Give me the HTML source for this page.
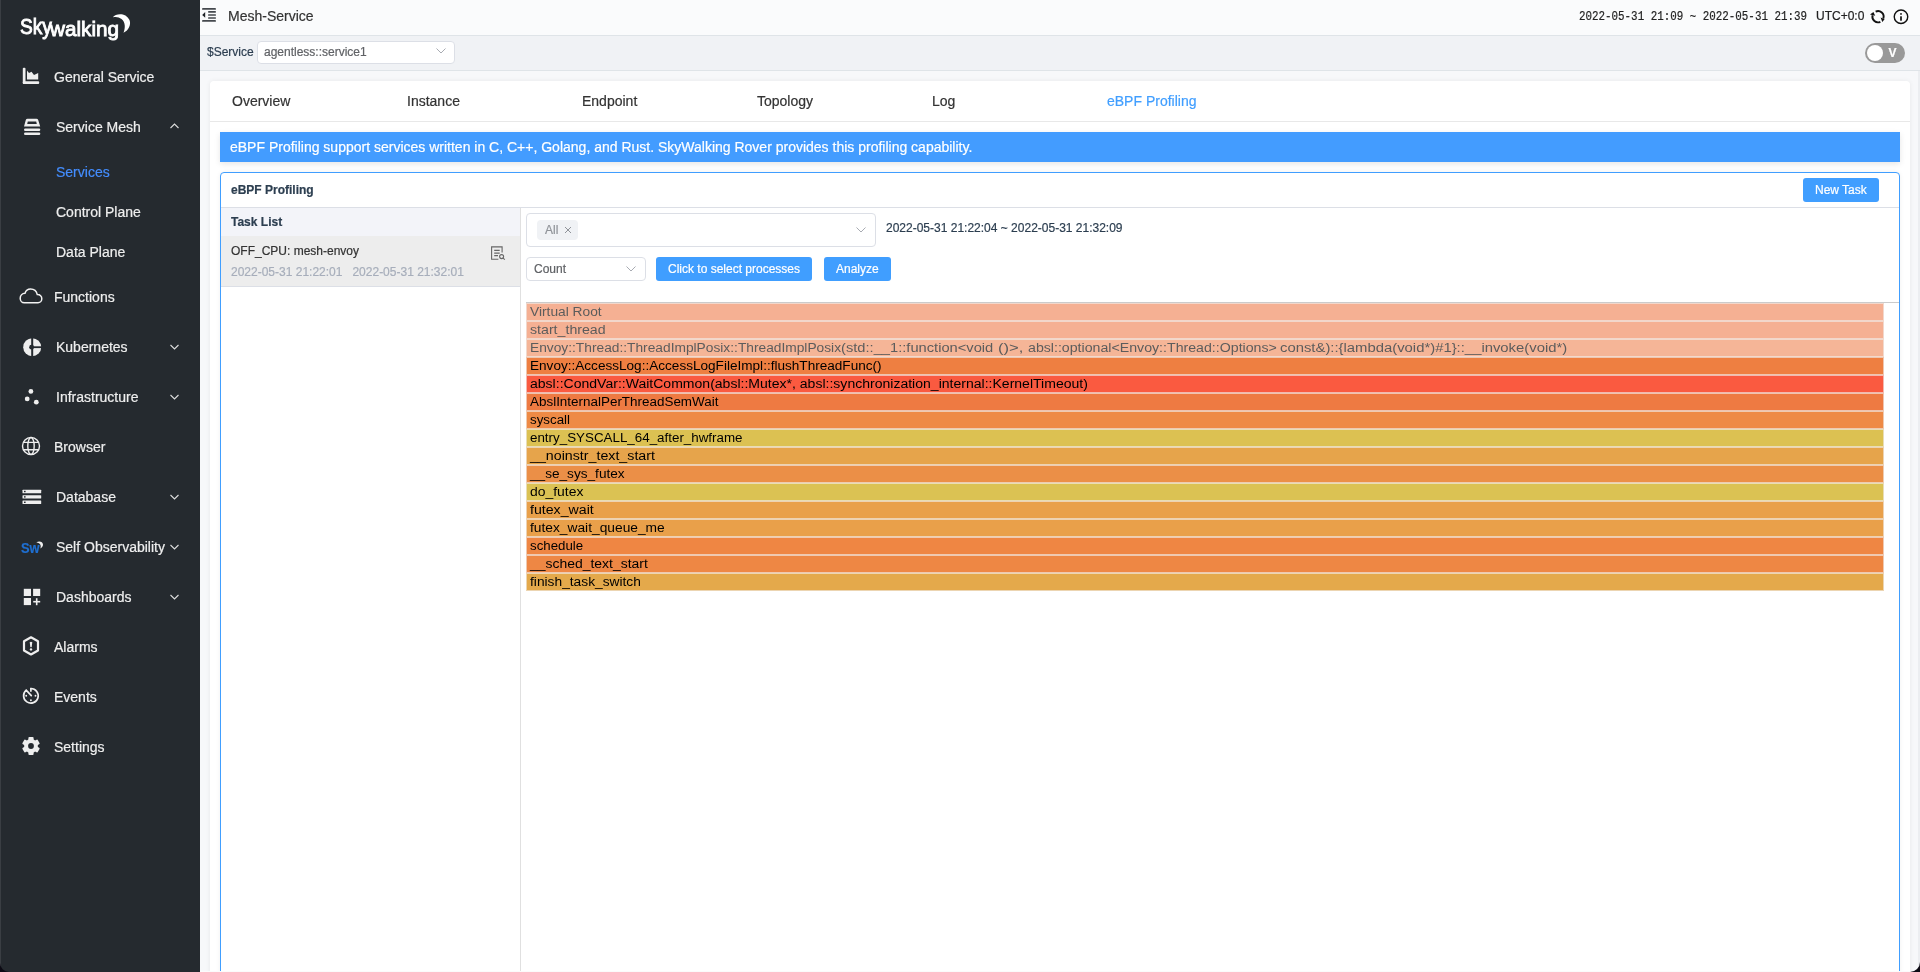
<!DOCTYPE html><html><head><meta charset="utf-8"><title>SkyWalking</title><style>
*{margin:0;padding:0;box-sizing:border-box}
html,body{width:1920px;height:972px;overflow:hidden;background:#f7f8fa;font-family:"Liberation Sans",sans-serif;}
.a{position:absolute;white-space:nowrap;-webkit-text-stroke:0.2px currentColor}
.t14{font-size:14px;line-height:16px;height:16px}
.t12{font-size:12px;line-height:14px;height:14px}
.b{font-weight:bold}
svg{position:absolute;overflow:visible}
</style></head><body><div id="root" style="position:absolute;left:0;top:0;width:1920px;height:972px;will-change:transform">
<div class="a" style="left:0;top:0;width:200px;height:972px;background:#252a2f"></div>
<div class="a" style="left:0;top:0;width:1px;height:972px;background:#3a3e43"></div>
<div class="a" style="left:19.5px;top:14px;font-size:22px;line-height:26px;color:#fff;-webkit-text-stroke:0.9px #fff;transform:scaleX(0.87);transform-origin:0 0">Sky</div>
<div class="a" style="left:49.5px;top:16px;font-size:21px;line-height:25px;color:#fff;-webkit-text-stroke:0.9px #fff;transform:scaleX(0.985);transform-origin:0 0">walking</div>
<svg style="left:0;top:0" width="140" height="45" viewBox="0 0 140 45"><path d="M112.8,17.3 C116,13 126,12.5 129.5,20 C131.5,25 128,31 123.5,32.7 C125.5,28 125.5,22 121.5,19 C119,17 116,16.5 112.8,17.3Z" fill="#fff"/></svg>
<div class="a t14" style="left:54px;top:69px;color:#eee">General Service</div>
<div class="a t14" style="left:56px;top:119px;color:#eee">Service Mesh</div>
<svg style="left:170px;top:123px" width="9" height="6" viewBox="0 0 9 6"><path d="M0.5,5 L4.5,1 L8.5,5" fill="none" stroke="#ddd" stroke-width="1.1"/></svg>
<div class="a t14" style="left:56px;top:164px;color:#448dfe">Services</div>
<div class="a t14" style="left:56px;top:204px;color:#eee">Control Plane</div>
<div class="a t14" style="left:56px;top:244px;color:#eee">Data Plane</div>
<div class="a t14" style="left:54px;top:289px;color:#eee">Functions</div>
<div class="a t14" style="left:56px;top:339px;color:#eee">Kubernetes</div>
<svg style="left:170px;top:344px" width="9" height="6" viewBox="0 0 9 6"><path d="M0.5,1 L4.5,5 L8.5,1" fill="none" stroke="#ddd" stroke-width="1.1"/></svg>
<div class="a t14" style="left:56px;top:389px;color:#eee">Infrastructure</div>
<svg style="left:170px;top:394px" width="9" height="6" viewBox="0 0 9 6"><path d="M0.5,1 L4.5,5 L8.5,1" fill="none" stroke="#ddd" stroke-width="1.1"/></svg>
<div class="a t14" style="left:54px;top:439px;color:#eee">Browser</div>
<div class="a t14" style="left:56px;top:489px;color:#eee">Database</div>
<svg style="left:170px;top:494px" width="9" height="6" viewBox="0 0 9 6"><path d="M0.5,1 L4.5,5 L8.5,1" fill="none" stroke="#ddd" stroke-width="1.1"/></svg>
<div class="a t14" style="left:56px;top:539px;color:#eee">Self Observability</div>
<svg style="left:170px;top:544px" width="9" height="6" viewBox="0 0 9 6"><path d="M0.5,1 L4.5,5 L8.5,1" fill="none" stroke="#ddd" stroke-width="1.1"/></svg>
<div class="a t14" style="left:56px;top:589px;color:#eee">Dashboards</div>
<svg style="left:170px;top:594px" width="9" height="6" viewBox="0 0 9 6"><path d="M0.5,1 L4.5,5 L8.5,1" fill="none" stroke="#ddd" stroke-width="1.1"/></svg>
<div class="a t14" style="left:54px;top:639px;color:#eee">Alarms</div>
<div class="a t14" style="left:54px;top:689px;color:#eee">Events</div>
<div class="a t14" style="left:54px;top:739px;color:#eee">Settings</div>
<svg style="left:22px;top:67px" width="18" height="18" viewBox="0 0 18 18"><g fill="#eee"><rect x="0.8" y="0.8" width="2.7" height="16.2" rx="1"/><rect x="0.8" y="14.2" width="16.4" height="2.8" rx="1"/><path d="M5,3.6 L7,6 L9.5,4.8 L12,8 L16.2,6 V12.6 H5Z"/></g></svg>
<svg style="left:23px;top:118px" width="18" height="18" viewBox="0 0 18 18"><path d="M1,8.5 L2.8,2 Q3.2,0.7 4.5,0.7 H13.5 Q14.8,0.7 15.2,2 L17.2,8.5 Z M4.8,3.4 L4.2,5.9 H13.8 L13.2,3.4Z" fill="#eee" fill-rule="evenodd"/><rect x="1" y="10.5" width="16.3" height="2.6" rx="1.3" fill="#eee"/><rect x="1" y="14.4" width="16.3" height="2.7" rx="1.3" fill="#eee"/></svg>
<svg style="left:19px;top:287px" width="24" height="18" viewBox="0 0 24 18"><path d="M5.2,15.8 H19 C21.2,15.8 22.8,13.8 22.8,11.8 C22.8,9.4 21,7.6 18.6,7.6 L18.3,7.6 C17.6,4.4 15,2 11.6,2 C8.7,2 6.7,3.8 6,6.2 C3.3,6.3 1.2,8.4 1.2,11.2 C1.2,13.8 3,15.8 5.2,15.8Z" fill="none" stroke="#f2f2f2" stroke-width="1.5"/></svg>
<svg style="left:23px;top:338px" width="19" height="19" viewBox="0 0 19 19"><circle cx="9.2" cy="9.2" r="9" fill="#eee"/><rect x="8.2" y="0" width="2" height="19" fill="#252a2f"/><rect x="9" y="8.3" width="10" height="1.8" fill="#252a2f"/><circle cx="8.6" cy="9.2" r="2.4" fill="#252a2f"/></svg>
<svg style="left:24px;top:388px" width="16" height="17" viewBox="0 0 16 17"><circle cx="6.9" cy="3.4" r="2.4" fill="#eee"/><circle cx="3.2" cy="10.9" r="2.4" fill="#eee"/><circle cx="12.3" cy="14.2" r="2.4" fill="#eee"/></svg>
<svg style="left:21px;top:436px" width="20" height="20" viewBox="0 0 20 20"><g fill="none" stroke="#eee" stroke-width="1.4"><circle cx="10" cy="10" r="8.5"/><ellipse cx="10" cy="10" rx="3.2" ry="8.5"/><path d="M2.5,6.4 H17.5 M2.5,13.8 H17.5"/></g></svg>
<svg style="left:22px;top:489px" width="20" height="17" viewBox="0 0 20 17"><g fill="#eee"><rect x="0.5" y="0.8" width="18.7" height="3.4" rx="0.5"/><rect x="0.5" y="6.2" width="18.7" height="3.4" rx="0.5"/><rect x="0.5" y="11.6" width="18.7" height="3.4" rx="0.5"/></g><g fill="#252a2f"><rect x="2" y="1.8" width="1.6" height="1.4"/><rect x="2" y="7.2" width="1.6" height="1.4"/><rect x="2" y="12.6" width="1.6" height="1.4"/></g></svg>
<div class="a b" style="left:20.5px;top:540px;font-size:14px;line-height:16px;color:#1f6fd1;transform:scaleX(0.92);transform-origin:0 0">Sw</div>
<svg style="left:36px;top:540.5px" width="8" height="8" viewBox="0 0 8 8"><path d="M0.3,1.6 C2.5,-0.2 6.8,0.2 7,3.6 C7.1,5.3 6,6.8 4.3,7.4 C5.2,5.5 4.8,3 3,2.2 C2.2,1.8 1.2,1.6 0.3,1.6Z" fill="#eee"/></svg>
<svg style="left:23px;top:588px" width="18" height="18" viewBox="0 0 18 18"><g fill="#eee"><rect x="0.8" y="0.8" width="7.2" height="7.2"/><rect x="10.1" y="0.8" width="7.1" height="7.2"/><rect x="0.8" y="10" width="7.2" height="7.1"/><rect x="12.9" y="10.2" width="1.6" height="7"/><rect x="10.2" y="12.9" width="7" height="1.6"/></g></svg>
<svg style="left:22px;top:636px" width="18" height="20" viewBox="0 0 18 20"><path d="M9,1.3 L16,5.3 V14.5 L9,18.5 L2,14.5 V5.3Z" fill="none" stroke="#eee" stroke-width="2.2" stroke-linejoin="round"/><path d="M7.7,6.2 Q9,5.2 10.3,6.2 L9.7,11 Q9,11.6 8.3,11 Z" fill="#eee"/><circle cx="9" cy="13.4" r="1.2" fill="#eee"/></svg>
<svg style="left:22px;top:687px" width="18" height="18" viewBox="0 0 18 18"><g fill="none" stroke="#eee" stroke-width="1.7" stroke-linecap="round"><path d="M8.9,1.5 A7.3,7.3 0 1 1 4.21,3.21 L9.3,8.6"/><path d="M8.9,1.5 V4.1"/></g><circle cx="4.2" cy="8.8" r="0.95" fill="#eee"/><circle cx="13.5" cy="8.8" r="0.95" fill="#eee"/><circle cx="8.9" cy="13.3" r="0.95" fill="#eee"/></svg>
<svg style="left:22px;top:737px" width="18" height="18" viewBox="0 0 18 18"><g fill="#eee"><circle cx="9" cy="9" r="6.9"/><rect x="6.4" y="0.1" width="5.2" height="17.8" rx="1"/><rect x="6.4" y="0.1" width="5.2" height="17.8" rx="1" transform="rotate(60 9 9)"/><rect x="6.4" y="0.1" width="5.2" height="17.8" rx="1" transform="rotate(120 9 9)"/></g><circle cx="9" cy="9" r="2.9" fill="#252a2f"/></svg>
<svg style="left:0;top:963px" width="9" height="9" viewBox="0 0 9 9"><path d="M0,0 V9 H9 A9,9 0 0 1 0,0Z" fill="#0c0a14"/></svg>
<div class="a" style="left:200px;top:0;width:1720px;height:35px;background:#fafbfc"></div>
<div class="a" style="left:200px;top:35px;width:1720px;height:1px;background:#dfe4e8"></div>
<svg style="left:202px;top:8px" width="15" height="15" viewBox="0 0 15 15"><g fill="#45494e"><rect x="0.1" y="0.1" width="13.8" height="1.7" rx="0.4"/><rect x="6.1" y="3.1" width="7.8" height="1.6" rx="0.4"/><rect x="6.1" y="6.2" width="7.8" height="1.6" rx="0.4"/><rect x="6.1" y="9.2" width="7.8" height="1.6" rx="0.4"/><rect x="0.1" y="12.1" width="13.8" height="1.7" rx="0.4"/><path d="M0.2,6.9 L3.2,4.1 V9.7Z" fill="#1d2126"/></g></svg>
<div class="a t14" style="left:228px;top:8px;color:#333">Mesh-Service</div>
<div class="a" style="left:1579px;top:10px;font-family:'Liberation Mono',monospace;font-size:13px;line-height:14px;color:#222;transform:scaleX(0.835);transform-origin:0 0">2022-05-31 21:09 ~ 2022-05-31 21:39</div>
<div class="a t12" style="left:1816px;top:9px;color:#222">UTC+0:0</div>
<svg style="left:1866px;top:6px" width="20" height="20" viewBox="0 0 20 20"><g fill="none" stroke="#111" stroke-width="1.9"><path d="M9.63,5.62 A5.6,5.6 0 0 1 17.26,12.62"/><path d="M14.37,15.78 A5.6,5.6 0 0 1 6.59,9.25"/></g><path d="M14.6,11.6 L18.6,13.3 L16.3,15.9Z M4.0,8.4 L7.4,5.9 L9.2,9.8Z" fill="#111"/></svg>
<svg style="left:1894px;top:10px" width="16" height="16" viewBox="0 0 16 16"><circle cx="7" cy="6.7" r="6.75" fill="none" stroke="#111" stroke-width="1.4"/><rect x="6.15" y="3.2" width="1.7" height="1.5" fill="#111"/><rect x="6.15" y="6.3" width="1.7" height="4.4" fill="#111"/></svg>
<div class="a" style="left:200px;top:36px;width:1720px;height:34px;background:#f0f2f5"></div>
<div class="a" style="left:200px;top:70px;width:1720px;height:1px;background:#dfe4e8"></div>
<div class="a t12" style="left:207px;top:45px;color:#2c3e50">$Service</div>
<div class="a" style="left:257px;top:41px;width:198px;height:23px;background:#fff;border:1px solid #dcdfe6;border-radius:4px"></div>
<div class="a t12" style="left:264px;top:45px;color:#606266">agentless::service1</div>
<svg style="left:436px;top:48px" width="10" height="6" viewBox="0 0 10 6"><path d="M0.5,0.5 L5,5 L9.5,0.5" fill="none" stroke="#a8abb2" stroke-width="1"/></svg>
<div class="a" style="left:1865px;top:43px;width:40px;height:20px;background:#999;border-radius:10px"></div>
<div class="a" style="left:1867px;top:45px;width:16px;height:16px;background:#fff;border-radius:8px"></div>
<div class="a t12 b" style="left:1888.5px;top:46px;color:#fff">V</div>
<div class="a" style="left:210px;top:81px;width:1700px;height:900px;background:#fff;border-radius:4px;box-shadow:0 0 5px rgba(0,0,0,0.07)"></div>
<div class="a" style="left:210px;top:121px;width:1700px;height:1px;background:#e8e8e8"></div>
<div class="a t14" style="left:232px;top:93px;color:#333">Overview</div>
<div class="a t14" style="left:407px;top:93px;color:#333">Instance</div>
<div class="a t14" style="left:582px;top:93px;color:#333">Endpoint</div>
<div class="a t14" style="left:757px;top:93px;color:#333">Topology</div>
<div class="a t14" style="left:932px;top:93px;color:#333">Log</div>
<div class="a t14" style="left:1107px;top:93px;color:#409eff">eBPF Profiling</div>
<div class="a" style="left:220px;top:132px;width:1680px;height:30px;background:#439cff;box-shadow:0 2px 6px rgba(0,0,0,0.1)"></div>
<div class="a t14" style="left:230px;top:139px;color:#fff">eBPF Profiling support services written in C, C++, Golang, and Rust. SkyWalking Rover provides this profiling capability.</div>
<div class="a" style="left:220px;top:172px;width:1680px;height:820px;border:1px solid #409eff;border-radius:4px;background:#fff;box-shadow:0 0 5px rgba(0,0,0,0.06)"></div>
<div class="a t12 b" style="left:231px;top:183px;color:#2c3e50">eBPF Profiling</div>
<div class="a" style="left:1803px;top:178px;width:76px;height:24px;background:#409eff;border-radius:3px"></div>
<div class="a t12" style="left:1815px;top:183px;color:#fff">New Task</div>
<div class="a" style="left:221px;top:207px;width:1678px;height:1px;background:#dcdfe6"></div>
<div class="a" style="left:221px;top:208px;width:299px;height:28px;background:#f3f4f9"></div>
<div class="a t12 b" style="left:231px;top:215px;color:#2c3e50">Task List</div>
<div class="a" style="left:221px;top:236px;width:299px;height:50px;background:#ededed"></div>
<div class="a" style="left:221px;top:286px;width:299px;height:1px;background:#dcdfe6"></div>
<div class="a t12" style="left:231px;top:244px;color:#333">OFF_CPU: mesh-envoy</div>
<div class="a t12" style="left:231px;top:265px;color:#a7aebb">2022-05-31 21:22:01&nbsp;&nbsp;&nbsp;2022-05-31 21:32:01</div>
<svg style="left:485px;top:240px" width="30" height="26" viewBox="0 0 30 26"><g fill="none" stroke="#666" stroke-width="1.1"><path d="M17.1,12.6 V6.9 H6.6 V19.2 H13.4"/><path d="M9.2,10.4 H14.7 M9.2,13.1 H14.7 M9.2,15.6 H13"/><circle cx="16.6" cy="16.6" r="2"/><path d="M18.1,18.1 L19.8,19.7"/></g></svg>
<div class="a" style="left:520px;top:208px;width:1px;height:763px;background:#e0e0e0"></div>
<div class="a" style="left:526px;top:213px;width:350px;height:34px;border:1px solid #dcdfe6;border-radius:4px;background:#fff"></div>
<div class="a" style="left:537px;top:220px;width:41px;height:20px;background:#f0f2f5;border-radius:4px"></div>
<div class="a t12" style="left:545px;top:223px;color:#909399">All</div>
<svg style="left:564px;top:226px" width="8" height="8" viewBox="0 0 8 8"><path d="M1,1 L7,7 M7,1 L1,7" stroke="#909399" stroke-width="1"/></svg>
<svg style="left:856px;top:227px" width="10" height="6" viewBox="0 0 10 6"><path d="M0.5,0.5 L5,5 L9.5,0.5" fill="none" stroke="#a8abb2" stroke-width="1"/></svg>
<div class="a t12" style="left:886px;top:221px;color:#2c3e50">2022-05-31 21:22:04 ~ 2022-05-31 21:32:09</div>
<div class="a" style="left:526px;top:257px;width:120px;height:24px;border:1px solid #dcdfe6;border-radius:4px;background:#fff"></div>
<div class="a t12" style="left:534px;top:262px;color:#606266">Count</div>
<svg style="left:626px;top:266px" width="10" height="6" viewBox="0 0 10 6"><path d="M0.5,0.5 L5,5 L9.5,0.5" fill="none" stroke="#a8abb2" stroke-width="1"/></svg>
<div class="a" style="left:656px;top:257px;width:156px;height:24px;background:#409eff;border-radius:3px"></div>
<div class="a t12" style="left:668px;top:262px;color:#fff">Click to select processes</div>
<div class="a" style="left:824px;top:257px;width:67px;height:24px;background:#409eff;border-radius:3px"></div>
<div class="a t12" style="left:836px;top:262px;color:#fff">Analyze</div>
<div class="a" style="left:526px;top:302px;width:1373px;height:1px;background:#cbcbcb"></div>
<div class="a" style="left:526px;top:303px;width:1358px;height:18px;background:#f5b093;box-shadow:inset 0 0 0 1px rgba(240,236,232,0.66)"></div>
<div class="a" style="left:530px;top:305px;font-size:12px;line-height:14px;color:#5c5c5c;-webkit-text-stroke:0;transform:scaleX(1.1462);transform-origin:0 0">Virtual Root</div>
<div class="a" style="left:526px;top:321px;width:1358px;height:18px;background:#f5b093;box-shadow:inset 0 0 0 1px rgba(240,236,232,0.66)"></div>
<div class="a" style="left:530px;top:323px;font-size:12px;line-height:14px;color:#5c5c5c;-webkit-text-stroke:0;transform:scaleX(1.1810);transform-origin:0 0">start_thread</div>
<div class="a" style="left:526px;top:339px;width:1358px;height:18px;background:#f5b597;box-shadow:inset 0 0 0 1px rgba(240,236,232,0.66)"></div>
<div class="a" style="left:530.3px;top:341px;font-size:12px;line-height:14px;color:#5c5c5c;-webkit-text-stroke:0;transform:scaleX(1.1459);transform-origin:0 0">Envoy::Thread::ThreadImplPosix::ThreadImplPosix</div>
<div class="a" style="left:841.3px;top:341px;font-size:12px;line-height:14px;color:#5c5c5c;-webkit-text-stroke:0;transform:scaleX(1.2239);transform-origin:0 0">(std::__1::function&lt;void </div>
<div class="a" style="left:997.6px;top:341px;font-size:12px;line-height:14px;color:#5c5c5c;-webkit-text-stroke:0;transform:scaleX(1.3843);transform-origin:0 0">()&gt;, </div>
<div class="a" style="left:1027.6px;top:341px;font-size:12px;line-height:14px;color:#5c5c5c;-webkit-text-stroke:0;transform:scaleX(1.1804);transform-origin:0 0">absl::optional&lt;Envoy::Thread::Options&gt; </div>
<div class="a" style="left:1280.3px;top:341px;font-size:12px;line-height:14px;color:#5c5c5c;-webkit-text-stroke:0;transform:scaleX(1.2373);transform-origin:0 0">const&amp;)::{lambda(void*)#1}::__invoke(void*)</div>
<div class="a" style="left:526px;top:357px;width:1358px;height:18px;background:#ee7f41;box-shadow:inset 0 0 0 1px rgba(240,236,232,0.66)"></div>
<div class="a" style="left:530px;top:359px;font-size:12px;line-height:14px;color:#000;-webkit-text-stroke:0;transform:scaleX(1.1312);transform-origin:0 0">Envoy::AccessLog::AccessLogFileImpl::flushThreadFunc()</div>
<div class="a" style="left:526px;top:375px;width:1358px;height:18px;background:#fa5a40;box-shadow:inset 0 0 0 1px rgba(240,236,232,0.66)"></div>
<div class="a" style="left:530px;top:377px;font-size:12px;line-height:14px;color:#000;-webkit-text-stroke:0;transform:scaleX(1.1693);transform-origin:0 0">absl::CondVar::WaitCommon(absl::Mutex*, absl::synchronization_internal::KernelTimeout)</div>
<div class="a" style="left:526px;top:393px;width:1358px;height:18px;background:#ee7a42;box-shadow:inset 0 0 0 1px rgba(240,236,232,0.66)"></div>
<div class="a" style="left:530px;top:395px;font-size:12px;line-height:14px;color:#000;-webkit-text-stroke:0;transform:scaleX(1.1196);transform-origin:0 0">AbslInternalPerThreadSemWait</div>
<div class="a" style="left:526px;top:411px;width:1358px;height:18px;background:#ee8a45;box-shadow:inset 0 0 0 1px rgba(240,236,232,0.66)"></div>
<div class="a" style="left:530px;top:413px;font-size:12px;line-height:14px;color:#000;-webkit-text-stroke:0;transform:scaleX(1.1106);transform-origin:0 0">syscall</div>
<div class="a" style="left:526px;top:429px;width:1358px;height:18px;background:#dcc152;box-shadow:inset 0 0 0 1px rgba(240,236,232,0.66)"></div>
<div class="a" style="left:530px;top:431px;font-size:12px;line-height:14px;color:#000;-webkit-text-stroke:0;transform:scaleX(1.1141);transform-origin:0 0">entry_SYSCALL_64_after_hwframe</div>
<div class="a" style="left:526px;top:447px;width:1358px;height:18px;background:#e6a44b;box-shadow:inset 0 0 0 1px rgba(240,236,232,0.66)"></div>
<div class="a" style="left:530px;top:449px;font-size:12px;line-height:14px;color:#000;-webkit-text-stroke:0;transform:scaleX(1.1855);transform-origin:0 0">__noinstr_text_start</div>
<div class="a" style="left:526px;top:465px;width:1358px;height:18px;background:#eb8f47;box-shadow:inset 0 0 0 1px rgba(240,236,232,0.66)"></div>
<div class="a" style="left:530px;top:467px;font-size:12px;line-height:14px;color:#000;-webkit-text-stroke:0;transform:scaleX(1.1348);transform-origin:0 0">__se_sys_futex</div>
<div class="a" style="left:526px;top:483px;width:1358px;height:18px;background:#dbc253;box-shadow:inset 0 0 0 1px rgba(240,236,232,0.66)"></div>
<div class="a" style="left:530px;top:485px;font-size:12px;line-height:14px;color:#000;-webkit-text-stroke:0;transform:scaleX(1.1605);transform-origin:0 0">do_futex</div>
<div class="a" style="left:526px;top:501px;width:1358px;height:18px;background:#e9a04a;box-shadow:inset 0 0 0 1px rgba(240,236,232,0.66)"></div>
<div class="a" style="left:530px;top:503px;font-size:12px;line-height:14px;color:#000;-webkit-text-stroke:0;transform:scaleX(1.1793);transform-origin:0 0">futex_wait</div>
<div class="a" style="left:526px;top:519px;width:1358px;height:18px;background:#e9a04a;box-shadow:inset 0 0 0 1px rgba(240,236,232,0.66)"></div>
<div class="a" style="left:530px;top:521px;font-size:12px;line-height:14px;color:#000;-webkit-text-stroke:0;transform:scaleX(1.1475);transform-origin:0 0">futex_wait_queue_me</div>
<div class="a" style="left:526px;top:537px;width:1358px;height:18px;background:#ef8643;box-shadow:inset 0 0 0 1px rgba(240,236,232,0.66)"></div>
<div class="a" style="left:530px;top:539px;font-size:12px;line-height:14px;color:#000;-webkit-text-stroke:0;transform:scaleX(1.1055);transform-origin:0 0">schedule</div>
<div class="a" style="left:526px;top:555px;width:1358px;height:18px;background:#ee8744;box-shadow:inset 0 0 0 1px rgba(240,236,232,0.66)"></div>
<div class="a" style="left:530px;top:557px;font-size:12px;line-height:14px;color:#000;-webkit-text-stroke:0;transform:scaleX(1.1622);transform-origin:0 0">__sched_text_start</div>
<div class="a" style="left:526px;top:573px;width:1358px;height:18px;background:#e4a94b;box-shadow:inset 0 0 0 1px rgba(240,236,232,0.66)"></div>
<div class="a" style="left:530px;top:575px;font-size:12px;line-height:14px;color:#000;-webkit-text-stroke:0;transform:scaleX(1.1468);transform-origin:0 0">finish_task_switch</div>
<div class="a" style="left:200px;top:971px;width:1711px;height:1px;background:#fbfbfb"></div>
<div class="a" style="left:1918px;top:71px;width:2px;height:901px;background:#eceef1"></div>
<svg style="left:1910px;top:962px" width="10" height="10" viewBox="0 0 10 10"><path d="M10,0 V10 H0 A10,10 0 0 0 10,0Z" fill="#0c0a14"/></svg>
</div></body></html>
